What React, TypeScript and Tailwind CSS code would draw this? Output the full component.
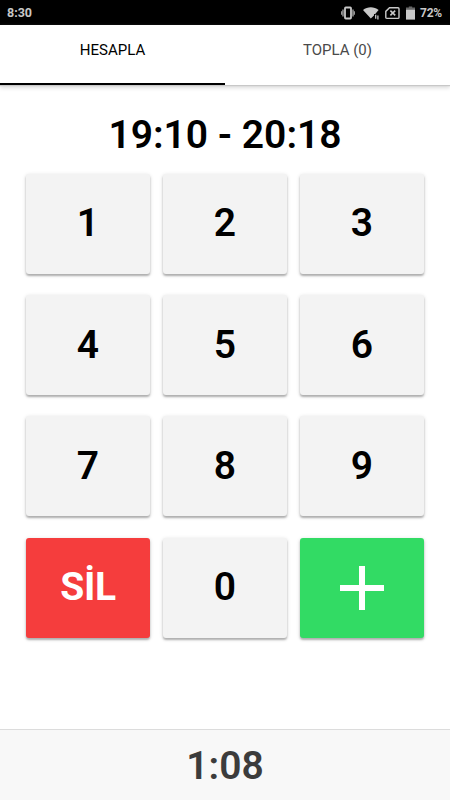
import { useState } from "react";

type KeyKind = "digit" | "clear" | "add";

interface PadKey {
  label: string;
  kind: KeyKind;
}

const KEYS: PadKey[] = [
  { label: "1", kind: "digit" }, { label: "2", kind: "digit" }, { label: "3", kind: "digit" },
  { label: "4", kind: "digit" }, { label: "5", kind: "digit" }, { label: "6", kind: "digit" },
  { label: "7", kind: "digit" }, { label: "8", kind: "digit" }, { label: "9", kind: "digit" },
  { label: "SİL", kind: "clear" }, { label: "0", kind: "digit" }, { label: "+", kind: "add" },
];

const KEY_STYLE: Record<KeyKind, string> = {
  digit: "bg-[#f3f3f3] text-black font-semibold",
  clear: "bg-[#f53d3d] text-white font-bold tracking-[-0.3px]",
  add: "bg-[#32db64] text-white",
};

function StatusBar() {
  return (
    <div className="h-[25px] bg-black flex items-center justify-between pl-[7px] pr-[8px] text-[#c8c8c8] text-[12.5px] font-bold shrink-0">
      <span className="pt-[1px]">8:30</span>
      <div className="flex items-center">
        <svg width="14" height="14" viewBox="0 0 14 14" fill="none">
          <rect x="4" y="1.5" width="6" height="11" rx=".8" stroke="#c8c8c8" strokeWidth="1.8" />
          <path d="M2 3.6v6.8M12 3.6v6.8" stroke="#a0a0a0" strokeWidth="1.4" />
          <path d="M.7 5.2v3.6M13.3 5.2v3.6" stroke="#a0a0a0" strokeWidth="1.3" />
        </svg>
        <svg className="ml-[8px]" width="17" height="14" viewBox="0 0 17 14" fill="none">
          <path d="M0 3.9C4.5.3 11.1.3 15.6 3.9L12.2 8H11v1.5L7.8 12.6Z" fill="#c8c8c8" />
          <path d="M12.7 8.8v4M14.9 9.4v4" stroke="#c8c8c8" strokeWidth="1.3" />
        </svg>
        <svg className="ml-[5px]" width="15" height="14" viewBox="0 0 15 14" fill="none">
          <path d="M4.5 1.8H13a1 1 0 0 1 1 1v8.6a1 1 0 0 1-1 1H1.8a1 1 0 0 1-1-1V5.4Z" stroke="#c8c8c8" strokeWidth="1.4" />
          <path d="m5.4 4.7 4.8 4.6M10.2 4.7 5.4 9.3" stroke="#c8c8c8" strokeWidth="1.6" />
        </svg>
        <svg className="ml-[6px]" width="9" height="14" viewBox="0 0 9 14">
          <path d="M0 3.5V1.6h2.8V.4h3.4v1.2H9v1.9Z" fill="#666" />
          <path d="M0 3.5h9V13.6H0Z" fill="#c8c8c8" />
        </svg>
        <span className="ml-[5px] pt-[1px] text-[12px] tracking-[-0.2px]">72%</span>
      </div>
    </div>
  );
}

export default function App() {
  const [tab, setTab] = useState(0);
  const tabs = ["HESAPLA", "TOPLA (0)"];

  return (
    <div className="w-[450px] h-[800px] bg-white flex flex-col overflow-hidden font-[Roboto,sans-serif]">
      <StatusBar />
      <div className="h-[60px] grid grid-cols-2 shrink-0 shadow-[0_1px_1px_#c8c8c8,0_3px_4px_#dcdcdc]">
        {tabs.map((name, i) => (
          <button
            key={name}
            onClick={() => setTab(i)}
            className={`text-[15px] pb-[8px] border-b-2 ${tab === i ? "text-black border-black" : "text-[#4a4a4a] border-transparent"}`}
          >
            {name}
          </button>
        ))}
      </div>

      <main className="flex-1 px-[26px] pt-[28.6px]">
        <h1 className="text-[39px] leading-[42px] font-semibold text-center text-black">19:10 - 20:18</h1>
        <div className="grid grid-cols-3 gap-x-[13px] gap-y-[21.3px] mt-[18.2px]">
          {KEYS.map((key) => (
            <button
              key={key.label}
              className={`h-[100px] rounded-[3px] flex items-center justify-center text-[39px] shadow-[0_2px_2px_rgba(0,0,0,0.25),0_1px_4px_rgba(0,0,0,0.15)] ${KEY_STYLE[key.kind]}`}
            >
              {key.kind === "add" ? (
                <svg width="44" height="44" viewBox="0 0 44 44" aria-label="Ekle">
                  <path d="M22 0v44M0 22h44" stroke="currentColor" strokeWidth="6" />
                </svg>
              ) : (
                <span className="pb-[0.5px]">{key.label}</span>
              )}
            </button>
          ))}
        </div>
      </main>

      <footer className="h-[71px] pt-[3px] shrink-0 bg-[#f8f8f8] border-t border-[#dcdcdc] flex items-center justify-center text-[39px] font-semibold text-[#3c3c3c]">
        1:08
      </footer>
    </div>
  );
}
